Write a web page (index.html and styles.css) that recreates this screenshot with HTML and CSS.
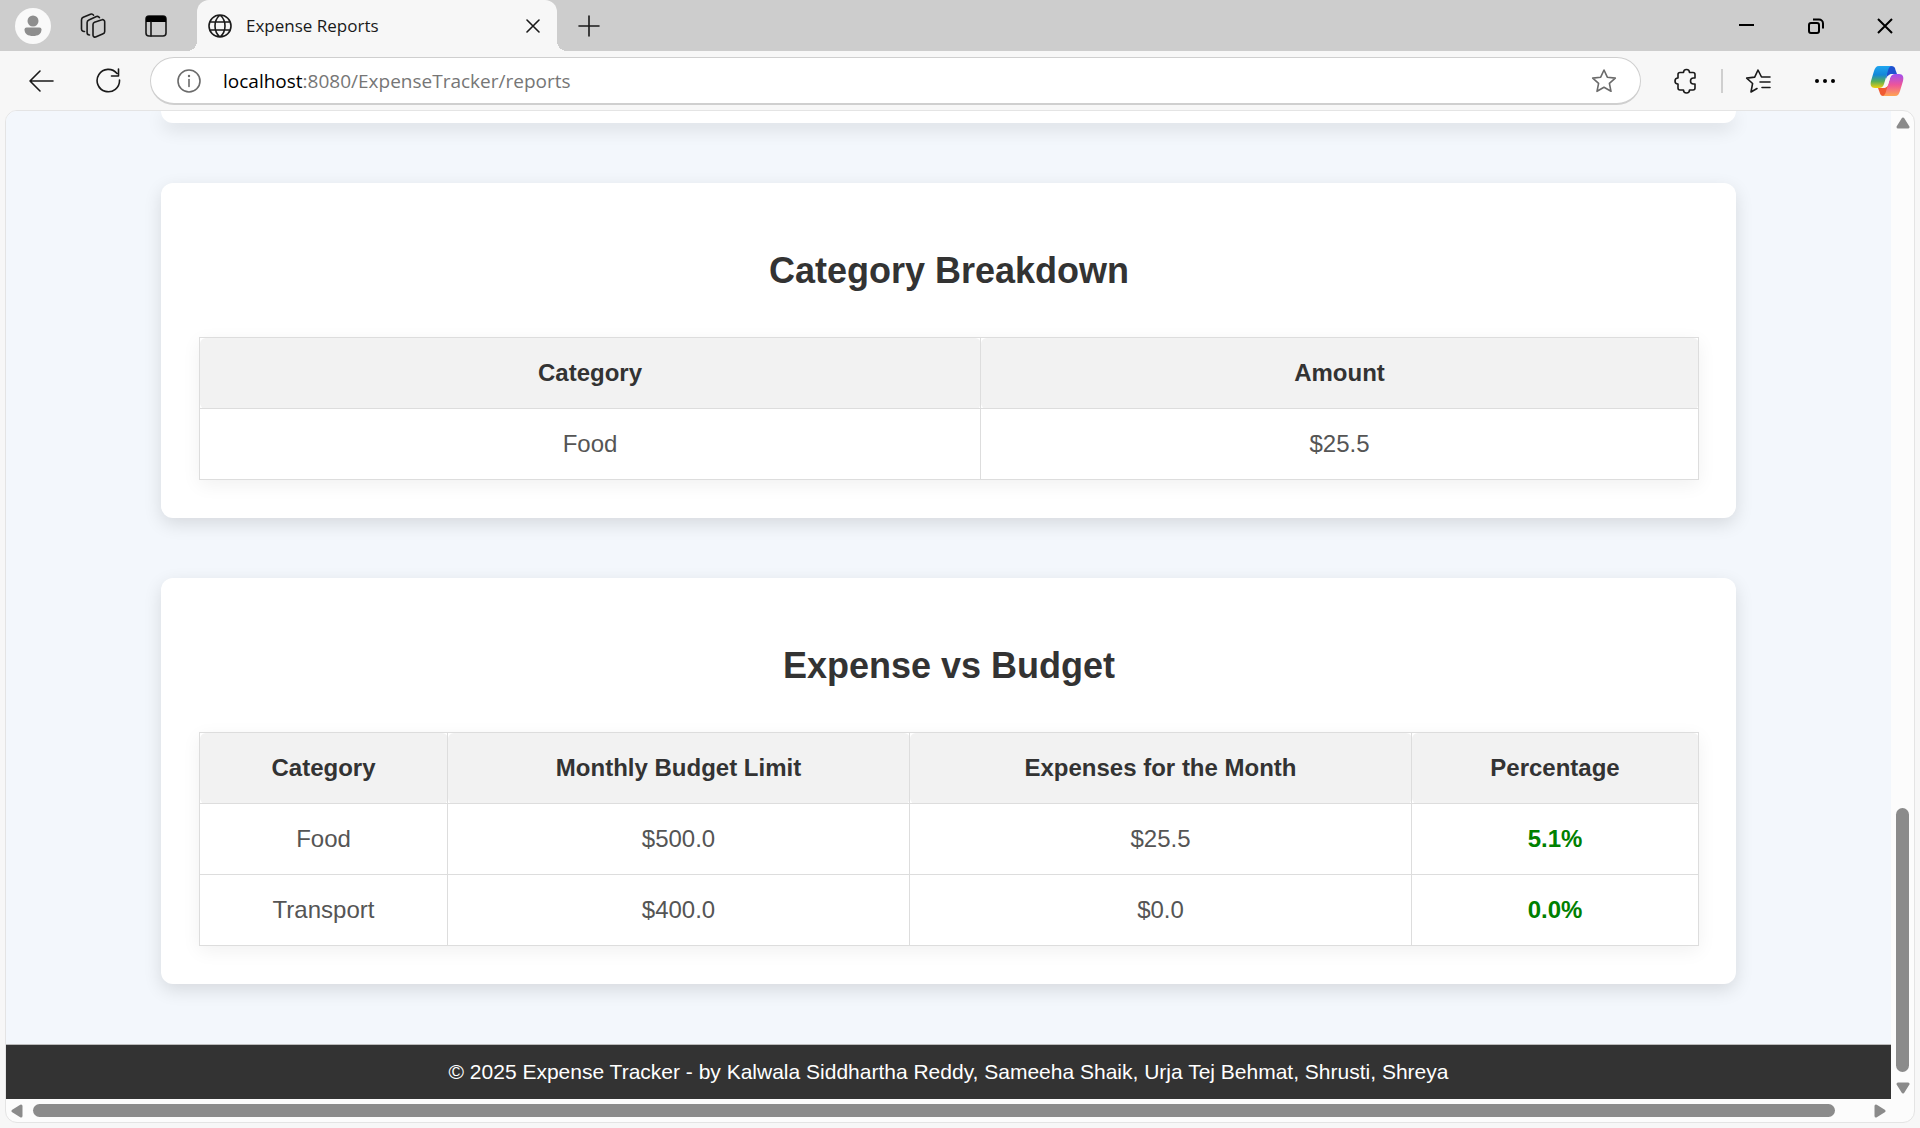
FILE: index.html
```html
<!DOCTYPE html>
<html lang="en">
<head>
<meta charset="utf-8">
<title>Expense Reports</title>
<link rel="stylesheet" href="styles.css">
</head>
<body>
<div class="browser">
  <header class="tabs">
    <div class="tabs-tools">
      <button class="avatar" aria-label="Profile"><svg width="36" height="36" viewBox="0 0 36 36"><circle cx="18" cy="18" r="18" fill="#f9f9f9"/><circle cx="18" cy="13" r="5.500" fill="#8e8e8e"/><path d="M9.500 21.500a2 2 0 0 1 2-2h13a2 2 0 0 1 2 2c0 4.500-3.500 6.500-8.500 6.500s-8.500-2-8.500-6.500z" fill="#8e8e8e"/></svg></button>
      <button aria-label="Workspaces"><svg width="26" height="26" viewBox="0 0 26 26"><path d="M14.500 9.200l7.500-2.400a2 2 0 0 1 2.700 1.900v9.800a2.500 2.500 0 0 1-1.600 2.300l-7.500 3.200a2 2 0 0 1-2.600-1.800V11.500a2.500 2.500 0 0 1 1.500-2.300zM9.500 22a2.500 2.500 0 0 1-2.400-2.500V9.600a3 3 0 0 1 1.800-2.700l7.500-3.300a2.400 2.400 0 0 1 3 1M4.500 18.500a2.500 2.500 0 0 1-3-2.500V7a3 3 0 0 1 1.700-2.700L10.500 1.200a2.400 2.400 0 0 1 3 1" class="line"/></svg></button>
      <button aria-label="Tab actions"><svg width="24" height="24" viewBox="0 0 24 24"><rect x="2" y="2" width="20" height="20" rx="3" class="line"/><path d="M2 5a3 3 0 0 1 3-3h14a3 3 0 0 1 3 3v3H2z"/><path d="M7 8v14" class="line"/></svg></button>
    </div>
    <div class="tab">
      <svg width="24" height="24" viewBox="0 0 24 24"><path d="M12 1a11 11 0 1 0 0 22 11 11 0 0 0 0-22zM12 1c-3 2.500-5 6-5 11s2 8.500 5 11c3-2.500 5-6 5-11s-2-8.500-5-11zM2 8h20M2 16h20" class="line"/></svg>
      <span class="tab-title">Expense Reports</span>
      <button aria-label="Close tab"><svg width="14" height="14" viewBox="0 0 14 14"><path d="M1 1l12 12M13 1L1 13" class="line"/></svg></button>
    </div>
    <button class="new-tab" aria-label="New tab"><svg width="22" height="22" viewBox="0 0 22 22"><path d="M11 1v20M1 11h20" class="line"/></svg></button>
    <div class="window-buttons">
      <button aria-label="Minimize"><svg width="16" height="16" viewBox="0 0 16 16"><path d="M0 7h15" class="line heavy"/></svg></button>
      <button aria-label="Restore"><svg width="16" height="16" viewBox="0 0 16 16"><rect x="1" y="5" width="10" height="10" rx="2" class="line heavy"/><path d="M5 1.500h6a4 4 0 0 1 4 4v5" class="line heavy"/></svg></button>
      <button aria-label="Close"><svg width="16" height="16" viewBox="0 0 16 16"><path d="M1 1l14 14M15 1L1 15" class="line heavy"/></svg></button>
    </div>
  </header>
  <nav class="toolbar">
    <button aria-label="Back"><svg width="26" height="24" viewBox="0 0 26 24"><path d="M25 12H2M12 2L2 12l10 10" class="line"/></svg></button>
    <button aria-label="Refresh"><svg width="26" height="26" viewBox="0 0 26 26"><path d="M22 5.500A11.200 11.200 0 1 0 24.500 12M23.500 1v7h-7" class="line"/></svg></button>
    <div class="address">
      <svg width="24" height="24" viewBox="0 0 24 24"><circle cx="12" cy="12" r="11" class="line gray"/><path d="M12 10.500v7" class="line gray"/><circle cx="12" cy="7" r="1.200" fill="#6b6b6b"/></svg>
      <a class="url" href="#"><span class="host">localhost</span>:8080/ExpenseTracker/reports</a>
      <button aria-label="Add to favorites"><svg width="26" height="26" viewBox="0 0 26 26"><path d="M13 2l3.300 7.200 8 .9-5.900 5.300 1.600 7.900-7-4-7 4 1.600-7.900L1.700 10.100l8-.9z" class="line gray"/></svg></button>
    </div>
    <div class="toolbar-actions">
      <div class="toolbar-group">
        <button aria-label="Extensions"><svg width="26" height="26" viewBox="0 0 26 26"><path d="M7 4.500h3.500a3 3 0 0 1 6 0H20a2 2 0 0 1 2 2V10h-1.500a3 3 0 0 0 0 6H22v4a2 2 0 0 1-2 2h-3.500a3 3 0 0 1-6 0H7a2 2 0 0 1-2-2v-4a3 3 0 0 1 0-6V6.500a2 2 0 0 1 2-2z" class="line"/></svg></button>
        <span class="divider"></span>
        <button aria-label="Favorites"><svg width="26" height="26" viewBox="0 0 26 26"><path d="M18 9h-1.500L13 2 9.700 9.100l-8 1 5.900 5.400L6 24l6-3.500M17 9h8M15 14h10M17 19.500h8" class="line"/></svg></button>
      </div>
      <button aria-label="Settings and more"><svg width="22" height="6" viewBox="0 0 22 6"><circle cx="3" cy="3" r="2"/><circle cx="11" cy="3" r="2"/><circle cx="19" cy="3" r="2"/></svg></button>
      <button aria-label="Copilot"><svg width="34" height="32" viewBox="0 0 34 32">
        <defs>
          <linearGradient id="cool" x1="0" y1="0" x2="0" y2="1"><stop offset="0" stop-color="#1fa6f0"/><stop offset=".4" stop-color="#1487d8"/><stop offset=".7" stop-color="#58ae58"/><stop offset="1" stop-color="#f4cf0c"/></linearGradient>
          <linearGradient id="warm" x1="0" y1="0" x2="0" y2="1"><stop offset="0" stop-color="#a04ff0"/><stop offset=".5" stop-color="#ee5599"/><stop offset="1" stop-color="#ffa552"/></linearGradient>
        </defs>
        <path d="M17 1h4c3 0 4 1 4.500 4L27 9h-4c-4 0-6 2-7 5z" fill="#1e51d0"/>
        <path d="M17 31h-3c-3 0-3.500-1-4.500-4L8 23h4c4 0 6-2 7-5z" fill="#f05a32"/>
        <path d="M9 1h12c-2 1-2.700 3-3.400 6l-3.600 12c-1 3-3 4-5 4H5c-4 0-5-3-4-7L4 6c1-3 2-5 5-5z" fill="url(#cool)"/>
        <path d="M25 31H13c2-1 2.700-3 3.400-6L20 13c1-3 3-4 5-4h4c4 0 5 3 4 7l-3 10c-1 3-2 5-5 5z" fill="url(#warm)"/>
        <path d="M19.500 10.500c1-1 2-1.500 3.500-1.500-2 1-2.500 2.500-3 4.500l-2 6.500c-.8 2-2.500 3-5 3 1.200-.8 1.700-2 2-3z" fill="#f7f7f7"/>
      </svg></button>
    </div>
  </nav>
  <div class="viewport">
    <div class="page">
      <main class="reports">
        <section class="card card-end"></section>
        <section class="card">
          <h2>Category Breakdown</h2>
          <table>
            <colgroup><col class="w-category-wide"><col></colgroup>
            <thead><tr><th scope="col">Category</th><th scope="col">Amount</th></tr></thead>
            <tbody><tr><td>Food</td><td>$25.5</td></tr></tbody>
          </table>
        </section>
        <section class="card">
          <h2>Expense vs Budget</h2>
          <table>
            <colgroup><col class="w-category"><col class="w-limit"><col class="w-expenses"><col></colgroup>
            <thead><tr><th scope="col">Category</th><th scope="col">Monthly Budget Limit</th><th scope="col">Expenses for the Month</th><th scope="col">Percentage</th></tr></thead>
            <tbody>
              <tr><td>Food</td><td>$500.0</td><td>$25.5</td><td class="under">5.1%</td></tr>
              <tr><td>Transport</td><td>$400.0</td><td>$0.0</td><td class="under">0.0%</td></tr>
            </tbody>
          </table>
        </section>
      </main>
      <footer class="footer">© 2025 Expense Tracker - by Kalwala Siddhartha Reddy, Sameeha Shaik, Urja Tej Behmat, Shrusti, Shreya</footer>
    </div>
    <div class="scroll scroll-y">
      <svg width="14" height="12" viewBox="0 0 14 12"><path d="M7 2l5 8H2z" class="arrow"/></svg>
      <div class="track"><div class="thumb"></div></div>
      <svg width="14" height="12" viewBox="0 0 14 12"><path d="M7 10l5-8H2z" class="arrow"/></svg>
    </div>
    <div class="scroll scroll-x">
      <svg width="12" height="14" viewBox="0 0 12 14"><path d="M2 7l8-5v10z" class="arrow"/></svg>
      <div class="track"><div class="thumb"></div></div>
      <svg width="12" height="14" viewBox="0 0 12 14"><path d="M10 7L2 2v10z" class="arrow"/></svg>
    </div>
  </div>
</div>
</body>
</html>
```
FILE: styles.css
```css
* { box-sizing: border-box; }

body {
  margin: 0;
  background: #f7f7f7;
  color: #333;
  font-family: "Liberation Sans", Arial, sans-serif;
}

button {
  display: flex;
  align-items: center;
  justify-content: center;
  padding: 0;
  border: 0;
  background: none;
  color: inherit;
}

svg { display: block; flex: none; }

.line {
  fill: none;
  stroke: #1a1a1a;
  stroke-width: 1.6;
  stroke-linecap: round;
  stroke-linejoin: round;
}
.heavy { stroke: #000; stroke-width: 2; stroke-linecap: butt; }
.gray { stroke: #6b6b6b; }

.browser {
  display: flex;
  flex-direction: column;
  height: 100vh;
}

/* Tab strip */
.tabs {
  display: flex;
  flex: none;
  height: 51px;
  background: #cdcdcd;
  font-family: "Open Sans", "Noto Sans", sans-serif;
}
.tabs-tools {
  display: flex;
  align-items: center;
  width: 197px;
  padding-left: 15px;
  gap: 29px;
}
.tabs-tools button:last-child { padding-left: 9px; }
.tab {
  position: relative;
  display: flex;
  align-items: center;
  width: 360px;
  padding: 0 17px 0 11px;
  gap: 14px;
  border-radius: 12px 12px 0 0;
  background: #f7f7f7;
  color: #1a1a1a;
}
.tab::before,
.tab::after {
  content: "";
  position: absolute;
  bottom: 0;
  width: 10px;
  height: 10px;
}
.tab::before { right: 100%; background: radial-gradient(circle at 0 0, #cdcdcd 10px, #f7f7f7 10px); }
.tab::after { left: 100%; background: radial-gradient(circle at 100% 0, #cdcdcd 10px, #f7f7f7 10px); }
.tab-title { flex: 1; font-size: 17px; line-height: 24px; }
.new-tab { width: 64px; }
.window-buttons { display: flex; margin-left: auto; padding-right: 1px; }
.window-buttons button { width: 69px; }

/* Toolbar */
.toolbar {
  display: flex;
  flex: none;
  align-items: center;
  height: 59px;
  padding: 1px 16px 0 28px;
  gap: 41px;
}
.address {
  display: flex;
  flex: 1;
  align-items: center;
  height: 48px;
  margin-left: -12px;
  padding: 0 23px 0 26px;
  gap: 22px;
  border: 1px solid #cfcfcf;
  border-bottom-width: 2px;
  border-radius: 24px;
  background: #fff;
}
.url {
  flex: 1;
  color: #767676;
  font-family: "Open Sans", "Noto Sans", sans-serif;
  font-size: 19px;
  line-height: 28px;
  text-decoration: none;
}
.host { color: #000; }
.toolbar-actions,
.toolbar-group {
  display: flex;
  align-items: center;
}
.toolbar-actions { gap: 34px; margin-left: -9px; }
.toolbar-group { gap: 22px; margin-right: 9px; }
.divider { width: 2px; height: 24px; background: #cfcfcf; }

/* Page frame with its scrollbars */
.viewport {
  display: grid;
  flex: 1;
  grid-template-columns: minmax(0, 1fr) 23px;
  grid-template-rows: minmax(0, 1fr) 23px;
  min-height: 0;
  margin: 0 5px 5px;
  overflow: hidden;
  border: 1px solid #e4e4e4;
  border-radius: 12px;
  background: #fcfcfc;
}
.page {
  display: flex;
  flex-direction: column;
  justify-content: space-between;
  overflow: hidden;
  background: #f3f7fc;
}
.reports {
  display: flex;
  flex-direction: column;
  gap: 60px;
  width: 100%;
  max-width: 1575px;
  margin: 0 auto;
}
.card {
  padding: 61px 37px 38px 38px;
  border-radius: 12px;
  background: #fff;
  box-shadow: 0 6px 18px rgba(0, 0, 0, .12);
}
.card-end { height: 12px; padding: 0; border-radius: 0 0 12px 12px; }
.card h2 {
  margin: 0 0 39px;
  font-size: 36px;
  line-height: 54px;
  text-align: center;
}
table {
  width: 100%;
  border-collapse: collapse;
  table-layout: fixed;
  box-shadow: 0 5px 18px rgba(0, 0, 0, .06);
  font-size: 24px;
  line-height: 34px;
  text-align: center;
}
th,
td {
  padding: 18px;
  border: 1px solid #ddd;
}
th { border-radius: 6px; background: #f2f2f2; }
td { color: #555; }
.under { color: green; font-weight: bold; }
.w-category-wide { width: 781px; }
.w-category { width: 248px; }
.w-limit { width: 462px; }
.w-expenses { width: 502px; }

.footer {
  padding: 12px;
  border-top: 1px solid #bbb;
  background: #333;
  color: #fff;
  font-size: 21px;
  line-height: 30px;
  text-align: center;
}

.scroll { display: flex; align-items: center; }
.scroll-y { flex-direction: column; padding: 6px 0 5px; }
.scroll-x { padding: 0 5px; }
.track { display: flex; flex: 1; }
.thumb { border-radius: 7px; background: #8b8b8b; }
.scroll-y .track { align-items: flex-end; padding-bottom: 10px; }
.scroll-y .thumb { width: 13px; height: 28%; }
.scroll-x .track { padding: 0 39px 0 10px; }
.scroll-x .thumb { width: 100%; height: 13px; }
.arrow { fill: #8b8b8b; stroke: #8b8b8b; stroke-width: 3; stroke-linejoin: round; }
```
